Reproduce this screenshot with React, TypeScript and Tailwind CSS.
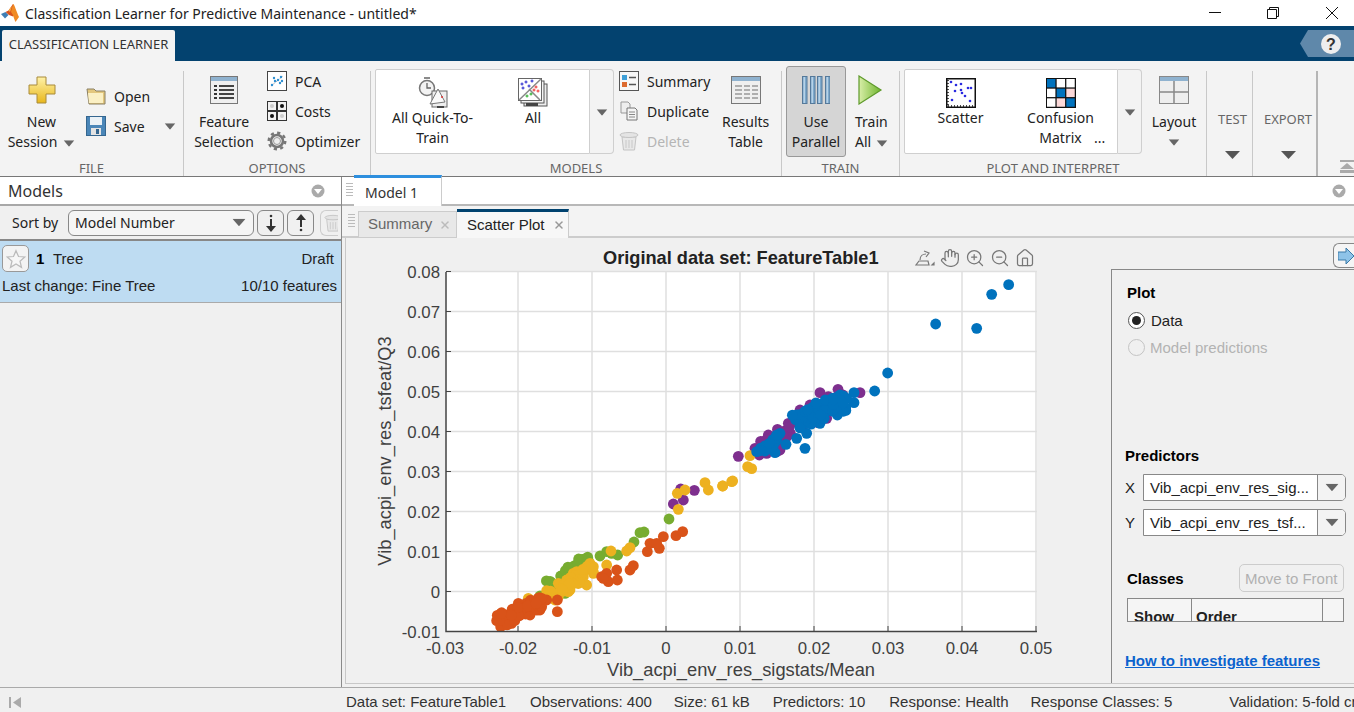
import type { ReactNode } from "react";
import { Hand, Home, X, ZoomIn, ZoomOut } from "lucide-react";

const ARIAL = "font-['Liberation_Sans',Arial,sans-serif]";

function Caret({ className = "" }: { className?: string }) {
  return (
    <svg width="12" height="7" viewBox="0 0 12 7" className={className}>
      <path d="M0 0h12L6 7z" fill="#666" />
    </svg>
  );
}

function MatlabLogo() {
  return (
    <svg width="20" height="20" viewBox="0 0 20 20">
      <path d="M0 11l4.500-2 3 3-3.500 3.500z" fill="#3f7fb5" />
      <path d="M4.500 9l3-1.500L12 1l3 9-3 3.500L8 12z" fill="#d9531e" />
      <path d="M12 1c1.500 0 3.500 8 6 13l-3.500 5c-1-2-2-5-2.500-7l-2-3z" fill="#f08a24" />
      <path d="M11 3l-3.500 4.500L9 9z" fill="#f5b041" />
    </svg>
  );
}

function PlusIcon() {
  return (
    <svg width="30" height="30" viewBox="0 0 30 30">
      <defs>
        <linearGradient id="gold" x1="0" y1="0" x2="0" y2="1">
          <stop offset="0" stopColor="#fff2a8" />
          <stop offset="1" stopColor="#e8b71c" />
        </linearGradient>
      </defs>
      <path d="M10 2h9v8h9v9h-9v9h-9v-9H2v-9h8z" fill="url(#gold)" stroke="#a88a3a" />
    </svg>
  );
}

function FolderIcon() {
  return (
    <svg width="20" height="18" viewBox="0 0 20 18">
      <path d="M1 2h7l2 2h9v13H3z" fill="#e3c77d" stroke="#8a8064" />
      <path d="M2 6h15v10H3z" fill="#fbf0c4" />
    </svg>
  );
}

function SaveIcon() {
  return (
    <svg width="20" height="20" viewBox="0 0 20 20">
      <rect x="0.500" y="0.500" width="19" height="19" fill="#4a86b8" stroke="#35668f" />
      <rect x="4" y="1" width="12" height="8" fill="#eaf1f6" />
      <rect x="5" y="12" width="10" height="7" fill="#e3e3e3" />
      <rect x="10" y="13" width="3" height="5" fill="#35668f" />
    </svg>
  );
}

function ListIcon() {
  return (
    <svg width="28" height="28" viewBox="0 0 28 28">
      <rect x="0.500" y="0.500" width="27" height="27" fill="#efefef" stroke="#777" />
      <rect x="1" y="1" width="26" height="4" fill="#8fb2cf" />
      {[9, 13, 17, 21].map((y) => (
        <g key={y}>
          <rect x="4" y={y} width="3" height="2" fill="#333" />
          <rect x="9" y={y} width="15" height="2" fill="#444" />
        </g>
      ))}
    </svg>
  );
}

function PcaIcon() {
  return (
    <svg width="20" height="20" viewBox="0 0 20 20">
      <rect x="0.500" y="0.500" width="19" height="19" fill="#fff" stroke="#444" />
      <path d="M4 15L16 5" stroke="#9ab" strokeDasharray="2 1" />
      {[[5, 14], [8, 10], [11, 9], [14, 6], [13, 12], [7, 7], [15, 10]].map(([x, y]) => (
        <circle key={`${x}-${y}`} cx={x} cy={y} r="1.200" fill="#2f8fd0" />
      ))}
    </svg>
  );
}

function CostsIcon() {
  const cells: [number, number, boolean][] = [[1, 1, false], [11, 1, true], [1, 11, true], [11, 11, false]];
  return (
    <svg width="20" height="20" viewBox="0 0 20 20">
      <rect width="20" height="20" fill="#333" />
      {cells.map(([x, y, dark]) => (
        <g key={`${x}-${y}`}>
          <rect x={x} y={y} width="8" height="8" fill="#f2f2f2" />
          <circle cx={x + 4} cy={y + 4} r="2" fill={dark ? "#111" : "#ccc"} />
        </g>
      ))}
    </svg>
  );
}

function GearIcon() {
  return (
    <svg width="20" height="20" viewBox="0 0 20 20" fill="none">
      <circle cx="10" cy="10" r="8.300" stroke="#777" strokeWidth="2.400" strokeDasharray="3.200 3.300" />
      <circle cx="10" cy="10" r="6" stroke="#777" strokeWidth="2.600" />
      <circle cx="10" cy="10" r="3.500" fill="#eee" stroke="#999" />
    </svg>
  );
}

function GalleryCharts() {
  return (
    <svg width="30" height="30" viewBox="0 0 30 30">
      <rect x="6" y="6" width="23" height="22" fill="#eee" stroke="#555" />
      <rect x="3" y="3" width="23" height="22" fill="#f5f5f5" stroke="#555" />
      <rect x="0.500" y="0.500" width="23" height="22" fill="#fff" stroke="#666" />
      <path d="M1 22L23 1M11 11l11 11" stroke="#888" strokeWidth="1.500" />
      {[[4, 6], [8, 4], [11, 8], [5, 10], [14, 3]].map(([x, y]) => (
        <path key={`${x}-${y}`} d={`M${x - 1.500} ${y}h3M${x} ${y - 1.500}v3`} stroke="#22c" />
      ))}
      {[[18, 9], [20, 13], [16, 12]].map(([x, y]) => (
        <path key={`${x}-${y}`} d={`M${x - 1.500} ${y}h3M${x} ${y - 1.500}v3`} stroke="#e33" />
      ))}
      {[[9, 18], [13, 16]].map(([x, y]) => (
        <path key={`${x}-${y}`} d={`M${x - 1.500} ${y}h3M${x} ${y - 1.500}v3`} stroke="#2a2" />
      ))}
      <rect x="8" y="25" width="12" height="3" fill="#444" />
    </svg>
  );
}

function QuickIcon() {
  return (
    <svg width="30" height="32" viewBox="0 0 30 32">
      <circle cx="9" cy="11" r="7.500" fill="#f3f3f3" stroke="#777" strokeWidth="1.500" />
      <path d="M9 6v5h4M6 1h6" stroke="#666" strokeWidth="1.300" fill="none" />
      <rect x="14" y="14" width="15" height="16" fill="#eee" stroke="#666" />
      <path d="M12 27l8-15 7 13z" fill="#fafafa" stroke="#777" />
      <circle cx="24" cy="20" r="1" fill="#d33" />
      <path d="M19 30h7" stroke="#444" strokeWidth="2" />
    </svg>
  );
}

function SummaryIcon() {
  return (
    <svg width="20" height="20" viewBox="0 0 20 20">
      <rect x="0.500" y="0.500" width="19" height="19" fill="#f7f7f7" stroke="#555" />
      <rect x="3" y="4" width="5" height="5" fill="#3fa0d8" />
      <rect x="3" y="11" width="5" height="5" fill="#dd6b30" />
      <path d="M10 6.500h7M10 13.500h7" stroke="#555" strokeWidth="1.500" />
    </svg>
  );
}

function DuplicateIcon() {
  return (
    <svg width="20" height="20" viewBox="0 0 20 20">
      <path d="M2 1h7l2 2v9H2z" fill="#eee" stroke="#999" />
      <path d="M8 7h8l2 2v10H8z" fill="#f5f5f5" stroke="#777" />
      <path d="M10 11h6M10 13.500h6M10 16h6" stroke="#888" />
    </svg>
  );
}

function TrashIcon({ size = 20 }: { size?: number }) {
  return (
    <svg width={size} height={size} viewBox="0 0 20 20">
      <path d="M3 6h14l-1.500 13h-11z" fill="#e8e8e8" stroke="#c4c4c4" />
      <ellipse cx="10" cy="4" rx="9" ry="2.500" fill="#e4e4e4" stroke="#c4c4c4" />
      <path d="M7 9v8M10 9v8M13 9v8" stroke="#c8c8c8" />
    </svg>
  );
}

function TableIcon() {
  return (
    <svg width="30" height="28" viewBox="0 0 30 28">
      <rect x="0.500" y="0.500" width="29" height="27" fill="#efefef" stroke="#777" />
      <rect x="1" y="1" width="28" height="4" fill="#8fb2cf" />
      {[9, 13, 17, 21].map((y) => (
        <path key={y} d={`M4 ${y + 1}h7M13 ${y + 1}h6M21 ${y + 1}h6`} stroke="#999" strokeWidth="1.500" />
      ))}
    </svg>
  );
}

function ParallelIcon() {
  return (
    <svg width="28" height="28" viewBox="0 0 28 28">
      {[0, 8, 15, 23].map((x) => (
        <g key={x}>
          <rect x={x + 0.500} y="0.500" width="4.500" height="27" fill="#7ea9cc" stroke="#55799a" />
          <rect x={x + 1.500} y="1" width="1.500" height="26" fill="#b6d2e7" />
        </g>
      ))}
    </svg>
  );
}

function PlayIcon() {
  return (
    <svg width="26" height="30" viewBox="0 0 26 30">
      <defs>
        <linearGradient id="play" x1="0" y1="0" x2="1" y2="0">
          <stop offset="0" stopColor="#d8eea8" />
          <stop offset="1" stopColor="#6fb52d" />
        </linearGradient>
      </defs>
      <path d="M2 1l22 14L2 29z" fill="url(#play)" stroke="#5e9a2b" strokeWidth="1.200" />
    </svg>
  );
}

function ScatterIcon() {
  const pts = [[5, 4], [10, 7], [15, 6], [9, 13], [15, 12], [16, 15], [22, 10], [25, 10], [19, 18], [6, 22], [24, 23]];
  return (
    <svg width="30" height="30" viewBox="0 0 30 30">
      <rect x="0.750" y="0.750" width="28.500" height="28.500" fill="#fff" stroke="#111" strokeWidth="1.500" />
      <path d="M2 28h26M2 2v26" stroke="#111" strokeDasharray="1 2" strokeWidth="1.500" />
      {pts.map(([x, y]) => (
        <circle key={`${x}-${y}`} cx={x} cy={y} r="1.300" fill="#2a2ae0" />
      ))}
    </svg>
  );
}

function ConfusionIcon() {
  const cells = ["#0072bd", "#fff", "#fff", "#fff", "#0072bd", "#fcd9d9", "#fff", "#fcd9d9", "#0072bd"];
  return (
    <svg width="30" height="30" viewBox="0 0 30 30">
      <rect width="30" height="30" fill="#111" />
      {cells.map((c, i) => (
        <rect key={i} x={1 + (i % 3) * 9.670} y={1 + Math.floor(i / 3) * 9.670} width="8.400" height="8.400" fill={c} />
      ))}
    </svg>
  );
}

function LayoutIcon() {
  return (
    <svg width="30" height="28" viewBox="0 0 30 28">
      <rect x="0.500" y="0.500" width="29" height="27" fill="#eee" stroke="#888" />
      <rect x="1" y="1" width="28" height="4" fill="#8fb2cf" />
      <path d="M1 16h28M15 5v22" stroke="#888" strokeWidth="1.500" />
    </svg>
  );
}

function BrushIcon() {
  return (
    <svg width="20" height="20" viewBox="0 0 20 20" fill="none" stroke="#777" strokeWidth="1.200">
      <path d="M1 17h13l-1-4H4zM5 12c0-4 3-6 6-6M9 3l5 2-3 4" />
      <path d="M17 17l2 0 0-2z" fill="#777" />
    </svg>
  );
}

function SmallTool({ icon, label, disabled, arrow }: { icon: ReactNode; label: string; disabled?: boolean; arrow?: boolean }) {
  return (
    <div className={`flex h-[30px] items-center ${disabled ? "text-[#b5b5b5]" : "text-[#222]"}`}>
      <span className="flex w-[20px] justify-center">{icon}</span>
      <span className="ml-[8px]">{label}</span>
      {arrow && <Caret className="ml-auto mr-[-1px] scale-90" />}
    </div>
  );
}

function BigTool({ icon, lines, arrow, className = "" }: { icon: ReactNode; lines: string[]; arrow?: boolean; className?: string }) {
  return (
    <div className={`flex flex-col items-center pt-[14px] leading-[20px] text-[#222] ${className}`}>
      <div className="flex h-[30px] items-center">{icon}</div>
      <div className="mt-[7px] text-center">
        {lines.map((l, i) => (
          <div key={l} className="whitespace-nowrap">
            {l}
            {arrow && i === lines.length - 1 && <Caret className="ml-[6px] inline-block scale-90 align-middle" />}
          </div>
        ))}
      </div>
    </div>
  );
}

function Section({ label, className, children }: { label: string; className: string; children: ReactNode }) {
  return (
    <div className={`flex h-full shrink-0 flex-col border-r border-[#c8c8c8] ${className}`}>
      <div className="flex h-[89px]">{children}</div>
      <div className="text-center text-[13px] leading-[16px] text-[#666]">{label}</div>
    </div>
  );
}

function GalleryItem({ icon, lines, more, className }: { icon: ReactNode; lines: string[]; more?: boolean; className: string }) {
  return (
    <div className={`flex flex-col items-center pt-[7px] leading-[20px] text-[#222] ${className}`}>
      <div className="flex h-[32px] items-center">{icon}</div>
      <div className="mt-[-1px] text-center">
        {lines.map((l, i) => (
          <div key={l} className="relative whitespace-nowrap">
            {l}
            {more && i === 1 && <span className="absolute left-full top-0">...</span>}
          </div>
        ))}
      </div>
    </div>
  );
}

function GalleryArrow() {
  return (
    <div className="flex w-[24px] items-center justify-center rounded-r-[4px] border border-l-0 border-[#cfcfcf] bg-[#f3f3f3]">
      <Caret className="mb-[-1px] scale-90" />
    </div>
  );
}

function Toolstrip() {
  return (
    <div className="flex h-[116px] shrink-0 border-b border-[#777] bg-[#f3f3f3] pt-[10px] text-[14px]">
      <Section label="FILE" className="w-[184px]">
        <BigTool icon={<PlusIcon />} lines={["New", "Session"]} arrow className="mt-[-10px] w-[83px]" />
        <div className="ml-[3px] w-[89px] pt-[10px]">
          <SmallTool icon={<FolderIcon />} label="Open" />
          <SmallTool icon={<SaveIcon />} label="Save" arrow />
        </div>
      </Section>
      <Section label="OPTIONS" className="w-[187px]">
        <BigTool icon={<ListIcon />} lines={["Feature", "Selection"]} className="mt-[-10px] w-[80px]" />
        <div className="ml-[3px] mt-[-5px]">
          <SmallTool icon={<PcaIcon />} label="PCA" />
          <SmallTool icon={<CostsIcon />} label="Costs" />
          <SmallTool icon={<GearIcon />} label="Optimizer" />
        </div>
      </Section>
      <Section label="MODELS" className="w-[411px]">
        <div className="ml-[4px] mt-[-2px] flex h-[85px]">
          <div className="flex w-[215px] rounded-l-[2px] border border-[#cfcfcf] bg-white">
            <GalleryItem icon={<QuickIcon />} lines={["All Quick-To-", "Train"]} className="w-[113px]" />
            <GalleryItem icon={<GalleryCharts />} lines={["All"]} className="w-[88px]" />
          </div>
          <GalleryArrow />
        </div>
        <div className="ml-[5px] mt-[-5px] w-[92px]">
          <SmallTool icon={<SummaryIcon />} label="Summary" />
          <SmallTool icon={<DuplicateIcon />} label="Duplicate" />
          <SmallTool icon={<TrashIcon />} label="Delete" disabled />
        </div>
        <BigTool icon={<TableIcon />} lines={["Results", "Table"]} className="mt-[-10px] w-[78px]" />
      </Section>
      <Section label="TRAIN" className="w-[118px]">
        <div className="ml-[4px] mt-[-5px] h-[91px] w-[60px] rounded-[3px] border border-[#999] bg-[#d5d5d5]">
          <BigTool icon={<ParallelIcon />} lines={["Use", "Parallel"]} className="mt-[-6px]" />
        </div>
        <div className="ml-[4px] mt-[-10px] flex w-[46px] flex-col items-start pt-[14px] leading-[20px] text-[#222]">
          <div className="flex h-[30px] w-[40px] items-center justify-center">
            <PlayIcon />
          </div>
          <div className="ml-[5px] mt-[7px]">Train</div>
          <div className="ml-[5px] whitespace-nowrap">
            All
            <Caret className="ml-[5px] inline-block scale-90 align-middle" />
          </div>
        </div>
      </Section>
      <Section label="PLOT AND INTERPRET" className="w-[307px]">
        <div className="ml-[4px] mt-[-2px] flex h-[85px]">
          <div className="flex w-[214px] rounded-l-[2px] border border-[#cfcfcf] bg-white">
            <GalleryItem icon={<ScatterIcon />} lines={["Scatter"]} className="w-[111px]" />
            <GalleryItem icon={<ConfusionIcon />} lines={["Confusion", "Matrix"]} more className="w-[89px]" />
          </div>
          <GalleryArrow />
        </div>
        <div className="ml-[1px] mt-[-10px] flex w-[62px] flex-col items-center">
          <BigTool icon={<LayoutIcon />} lines={["Layout"]} />
          <Caret className="mt-[7px] scale-90" />
        </div>
      </Section>
      <CollapsedSection label="TEST" className="w-[46px] pl-[6px]" />
      <CollapsedSection label="EXPORT" className="w-[65px] border-r-2 border-r-[#b5b5b5] pl-[7px]" />
      <div className="flex flex-1 items-end justify-end pb-[3px]">
        <svg width="14" height="14" viewBox="0 0 14 14">
          <path d="M0 1h14v2H0zM7 4l7 6H0zM0 11h14v3H0z" fill="#aaa" />
        </svg>
      </div>
    </div>
  );
}

function CollapsedSection({ label, className }: { label: string; className: string }) {
  return (
    <div className={`flex shrink-0 flex-col items-center border-r border-[#c8c8c8] pt-[40px] ${className}`}>
      <div className="text-[13px] leading-[16px] text-[#666]">{label}</div>
      <svg width="15" height="8" viewBox="0 0 15 8" className="mt-[24px]">
        <path d="M0 0h15L7.500 8z" fill="#555" />
      </svg>
    </div>
  );
}

function CircleMenu() {
  return (
    <svg width="14" height="14" viewBox="0 0 14 14">
      <circle cx="7" cy="7" r="6.500" fill="#aaa" />
      <path d="M3 5h8l-4 5z" fill="#fff" />
    </svg>
  );
}

function ModelsPanel() {
  return (
    <div className="flex w-[342px] shrink-0 flex-col border-r border-[#8a8a8a] bg-[#f0f0f0]">
      <div className="flex h-[29px] items-center justify-between border-b-2 border-[#a8a8a8] bg-white pl-[8px] pr-[16px] text-[16px] text-[#333]">
        Models
        <CircleMenu />
      </div>
      <div className="flex h-[35px] items-center border-b-2 border-[#888] pl-[12px] text-[14px] text-[#222]">
        Sort by
        <div className="ml-[10px] flex h-[26px] w-[186px] items-center justify-between rounded-[6px] border border-[#888] bg-[#f5f5f5] pl-[6px] pr-[8px]">
          Model Number
          <Caret className="scale-110" />
        </div>
        <div className="ml-[3px] flex h-[26px] w-[27px] items-center justify-center rounded-[6px] border border-[#888]">
          <svg width="12" height="18" viewBox="0 0 12 18">
            <circle cx="6" cy="2" r="1.300" fill="#333" />
            <path d="M6 5v9" stroke="#333" strokeWidth="2" />
            <path d="M1 12h10l-5 6z" fill="#333" />
          </svg>
        </div>
        <div className="ml-[3px] flex h-[26px] w-[27px] items-center justify-center rounded-[6px] border border-[#888]">
          <svg width="12" height="18" viewBox="0 0 12 18">
            <circle cx="6" cy="16" r="1.300" fill="#333" />
            <path d="M6 4v9" stroke="#333" strokeWidth="2" />
            <path d="M1 6h10L6 0z" fill="#333" />
          </svg>
        </div>
        <div className="ml-[6px] flex h-[26px] w-[18px] items-center overflow-hidden rounded-l-[6px] border border-r-0 border-[#ccc] pl-[3px]">
          <span className="shrink-0">
            <TrashIcon size={18} />
          </span>
        </div>
      </div>
      <div className={`h-[62px] border-b border-[#aaa] bg-[#bedcf2] text-[15px] leading-[21px] text-[#222] ${ARIAL}`}>
        <div className="flex h-[33px] items-center pl-[2px] pr-[7px] pt-[2px]">
          <div className="flex h-[27px] w-[27px] items-center justify-center rounded-[5px] border border-[#999] bg-[#f3f3f3]">
            <svg width="20" height="20" viewBox="0 0 24 24">
              <path d="M12 2l3 7 7.500.600-5.700 5 1.800 7.400L12 18l-6.600 4 1.800-7.400-5.700-5L9 9z" fill="#f7f7f7" stroke="#bbb" strokeWidth="1.500" />
            </svg>
          </div>
          <b className="ml-[7px] w-[17px] text-black">1</b>
          <span>Tree</span>
          <span className="ml-auto">Draft</span>
        </div>
        <div className="mt-[1px] flex justify-between pl-[2px] pr-[4px]">
          <span>Last change: Fine Tree</span>
          <span>10/10 features</span>
        </div>
      </div>
    </div>
  );
}

function Grip() {
  return <div className="h-[13px] w-[7px] bg-[repeating-linear-gradient(#bbb_0,#bbb_1px,transparent_1px,transparent_3px)]" />;
}

// reference coordinates of the dots, read off 3x crops
const LOW = (x: number, y: number): [number, number] => [430 + x / 3, 380 + y / 3];
const HIGH = (x: number, y: number): [number, number] => [700 + x / 3, 270 + y / 3];
const rand = (i: number) => {
  const s = Math.sin(i * 12.9898) * 43758.5453;
  return s - Math.floor(s);
};
// extra dots to fill the dense part of a cluster
function band(n: number, x0: number, y0: number, x1: number, y1: number, spread: number, seed: number): [number, number][] {
  return Array.from({ length: n }, (_, i) => {
    const t = rand(seed + i);
    const off = (rand(seed + 500 + i) - 0.5) * spread;
    return [x0 + (x1 - x0) * t + off * 0.5, y0 + (y1 - y0) * t + off];
  });
}

const PURPLE: [number, number][] = [
  ...[[752, 327], [793, 331], [760, 360], [730, 372]].map(([x, y]) => LOW(x, y)),
  ...[[115, 559], [165, 535], [178, 555], [205, 495], [200, 510], [265, 460], [270, 490], [240, 540], [300, 420], [330, 405], [360, 368], [414, 358], [480, 368], [385, 380], [380, 445], [260, 500], [200, 550], [230, 545]].map(([x, y]) => HIGH(x, y)),
  ...band(30, 762, 448, 850, 394, 14, 40),
];
const GREEN: [number, number][] = [
  ...[[330, 648], [368, 610], [392, 588], [432, 558], [450, 560], [405, 640], [510, 528], [530, 515], [563, 525], [545, 520], [612, 486], [630, 458], [642, 456], [717, 417]].map(([x, y]) => LOW(x, y)),
  ...band(24, 548, 586, 590, 556, 10, 140),
];
const YELLOW: [number, number][] = [
  ...[[295, 655], [350, 632], [375, 660], [385, 610], [400, 620], [420, 630], [430, 580], [445, 600], [460, 590], [430, 610], [410, 600], [440, 575], [470, 615], [480, 550], [490, 560], [490, 580], [530, 555], [543, 513], [590, 513], [600, 503], [745, 388], [742, 340], [765, 330], [825, 308], [835, 330], [878, 318], [905, 305], [415, 635], [395, 630], [365, 640]].map(([x, y]) => LOW(x, y)),
  ...[[150, 557], [143, 590], [155, 596], [98, 633], [68, 648]].map(([x, y]) => HIGH(x, y)),
  ...band(40, 552, 596, 592, 568, 9, 240),
];
const ORANGE: [number, number][] = [
  ...[[200, 722], [212, 740], [225, 705], [245, 730], [265, 670], [250, 690], [270, 690], [290, 680], [300, 705], [320, 680], [330, 690], [350, 660], [382, 660], [382, 695], [215, 715], [235, 715], [260, 700], [280, 690], [305, 680], [330, 665], [515, 590], [530, 580], [560, 570], [535, 605], [562, 600], [520, 595], [600, 570], [610, 557], [652, 515], [660, 490], [688, 505], [680, 490], [700, 470], [738, 467], [758, 455]].map(([x, y]) => LOW(x, y)),
  ...band(50, 498, 621, 545, 602, 13, 340),
];
const BLUE: [number, number][] = [
  ...[[926, 44], [875, 73], [707, 162], [830, 175], [563, 309], [524, 363], [462, 368], [315, 535], [290, 505], [258, 523], [225, 548], [170, 545], [195, 543], [240, 490], [230, 510], [210, 530], [290, 435], [315, 425], [350, 420], [300, 470], [320, 490], [360, 460], [340, 455], [380, 410], [400, 385], [420, 375], [412, 435], [437, 413], [462, 398], [370, 430], [330, 445], [390, 420], [350, 440], [410, 400], [440, 385], [320, 460], [300, 445]].map(([x, y]) => HIGH(x, y)),
  ...band(50, 795, 422, 846, 400, 17, 440),
  ...band(14, 758, 451, 785, 436, 9, 640),
];

const SERIES: [string, [number, number][]][] = [
  ["#7e2f8e", PURPLE],
  ["#77ac30", GREEN],
  ["#edb120", YELLOW],
  ["#d95319", ORANGE],
  ["#0072bd", BLUE],
];

const X_TICKS = [-0.03, -0.02, -0.01, 0, 0.01, 0.02, 0.03, 0.04, 0.05];
const Y_TICKS = [-0.01, 0, 0.01, 0.02, 0.03, 0.04, 0.05, 0.06, 0.07, 0.08];
const px = (v: number) => 666 + v * 7400;
const py = (v: number) => 591.500 - v * 4000;

// viewBox uses page coordinates so the crop numbers can be used directly
function Chart() {
  return (
    <svg width="765" height="422" viewBox="346 262 765 422" className={ARIAL}>
      <rect x="446" y="272" width="591" height="359" fill="#fff" />
      {X_TICKS.slice(1).map((v) => (
        <path key={v} d={`M${px(v)} 272V631`} stroke="#dfdfdf" strokeWidth="1.500" />
      ))}
      {Y_TICKS.slice(1).map((v) => (
        <path key={v} d={`M446 ${py(v)}H1037`} stroke="#dfdfdf" strokeWidth="1.500" />
      ))}
      {SERIES.map(([color, pts]) => (
        <g key={color} fill={color}>
          {pts.map(([x, y], i) => (
            <circle key={i} cx={x} cy={y} r="5.400" />
          ))}
        </g>
      ))}
      <path d="M446 272V631.500H1037" fill="none" stroke="#444" strokeWidth="1.500" />
      {X_TICKS.slice(1).map((v) => (
        <path key={v} d={`M${px(v)} 631V626`} stroke="#444" />
      ))}
      {Y_TICKS.slice(1).map((v) => (
        <path key={v} d={`M446 ${py(v)}H451`} stroke="#444" />
      ))}
      <g fill="#404040" fontSize="16.800">
        {X_TICKS.map((v) => (
          <text key={v} x={px(v) + (v === -0.03 ? 1 : 0)} y="654" textAnchor="middle">
            {v}
          </text>
        ))}
        {Y_TICKS.map((v) => (
          <text key={v} x="440" y={py(v) + 6} textAnchor="end">
            {v}
          </text>
        ))}
        <text x="741" y="676" textAnchor="middle" fontSize="18.300">
          Vib_acpi_env_res_sigstats/Mean
        </text>
        <text transform="translate(391 451) rotate(-90)" textAnchor="middle" fontSize="18.300">
          Vib_acpi_env_res_tsfeat/Q3
        </text>
      </g>
    </svg>
  );
}

function Select({ label, value }: { label: string; value: string }) {
  return (
    <div className="flex items-center">
      <span className="w-[18px]">{label}</span>
      <div className="flex h-[27px] w-[203px] overflow-hidden rounded-r-[5px] border border-[#888] bg-white">
        <div className="flex w-[174px] items-center whitespace-nowrap border-r border-[#888] pl-[6px]">{value}</div>
        <div className="flex flex-1 items-center justify-center bg-[#f3f3f3]">
          <Caret className="scale-110" />
        </div>
      </div>
    </div>
  );
}

function OptionsPanel() {
  return (
    <div className={`mt-[31px] flex h-[414px] w-[243px] shrink-0 flex-col border-l border-t border-[#888] text-[15px] leading-[21px] text-[#222] ${ARIAL}`}>
      <div className="ml-[15px] mt-[14px] font-bold leading-[18px] text-black">Plot</div>
      <div className="ml-[16px] mt-[8px] flex items-center">
        <span className="flex h-[17px] w-[17px] items-center justify-center rounded-full border border-[#555] bg-white">
          <span className="h-[9px] w-[9px] rounded-full bg-[#222]" />
        </span>
        <span className="ml-[6px]">Data</span>
      </div>
      <div className="ml-[16px] mt-[6px] flex items-center text-[#b3b3b3]">
        <span className="h-[17px] w-[17px] rounded-full border border-[#c4c4c4]" />
        <span className="ml-[5px]">Model predictions</span>
      </div>
      <div className="ml-[13px] mt-[89px] font-bold leading-[18px] text-black">Predictors</div>
      <div className="ml-[13px] mt-[9px] flex flex-col gap-[8px]">
        <Select label="X" value="Vib_acpi_env_res_sig..." />
        <Select label="Y" value="Vib_acpi_env_res_tsf..." />
      </div>
      <div className="ml-[15px] mt-[28px] flex h-[28px] items-center">
        <b className="text-black">Classes</b>
        <div className="ml-[55px] flex h-[28px] w-[105px] items-center justify-center rounded-[5px] border border-[#ccc] text-[#b0b0b0]">
          Move to Front
        </div>
      </div>
      <div className="ml-[15px] mt-[6px] flex h-[24px] w-[217px] overflow-hidden border border-[#888] bg-[#f5f5f5] font-bold">
        <div className="w-[64px] border-r border-[#888] pl-[6px] pt-[7px]">Show</div>
        <div className="w-[131px] border-r border-[#888] pl-[4px] pt-[7px]">Order</div>
      </div>
      <a className="ml-[13px] mt-[28px] font-bold text-[#0b63ce] underline">How to investigate features</a>
    </div>
  );
}

function MainArea() {
  return (
    <div className="flex min-w-0 flex-1 flex-col">
      <div className="flex h-[29px] shrink-0 items-end border-b-2 border-[#b8b8b8] bg-white pl-[4px]">
        <div className="mb-[8px]">
          <Grip />
        </div>
        <div className="mb-[-2px] ml-[1px] flex h-[31px] w-[88px] items-center border-r border-[#ccc] border-t-[3px] border-t-[#2e8fde] bg-white pl-[11px] text-[14px] text-[#333]">
          Model 1
        </div>
        <div className="mb-[6px] ml-auto mr-[8px]">
          <CircleMenu />
        </div>
      </div>
      <div className={`flex h-[32px] shrink-0 items-end border-b-2 border-[#ccc] bg-[#f3f3f3] pl-[6px] text-[15px] ${ARIAL}`}>
        <div className="mb-[9px]">
          <Grip />
        </div>
        <div className="mb-[-2px] ml-[3px] flex h-[27px] w-[99px] items-center border border-[#ccc] bg-[#e8e8e8] pl-[9px] text-[#666]">
          Summary
          <X size={12} strokeWidth={3} className="ml-[7px] text-[#bbb]" />
        </div>
        <div className="mb-[-2px] flex h-[29px] w-[112px] items-center border-r border-[#ccc] border-t-[3px] border-t-[#00426f] bg-[#f7f7f7] pl-[10px] text-[#222]">
          Scatter Plot
          <X size={12} strokeWidth={3} className="ml-[8px] text-[#999]" />
        </div>
      </div>
      <div className="flex min-h-0 flex-1 bg-[#f0f0f0] pl-[3px]">
        <div className="relative flex h-[446px] min-w-0 flex-1 border-b border-[#c8c8c8]">
          <div className="flex h-[446px] w-[766px] shrink-0 flex-col border-l border-[#c8c8c8]">
            <div className={`h-[24px] pl-[257px] pt-[11px] text-[18.200px] font-bold leading-[18px] text-[#222] ${ARIAL}`}>
              Original data set: FeatureTable1
            </div>
            <Chart />
          </div>
          <OptionsPanel />
          <div className="absolute left-[570px] top-[10px] flex items-center gap-[5px] text-[#777]">
            <BrushIcon />
            <Hand size={20} strokeWidth={1.500} />
            <ZoomIn size={20} strokeWidth={1.500} />
            <ZoomOut size={20} strokeWidth={1.500} />
            <Home size={20} strokeWidth={1.500} />
          </div>
          <div className="absolute left-[988px] top-[5px] flex h-[25px] w-[30px] items-center rounded-l-[6px] border border-r-0 border-[#888] bg-[#f5f5f5] pl-[4px]">
            <svg width="20" height="16" viewBox="0 0 20 16">
              <path d="M0 4h8V0l8 8-8 8v-4H0z" fill="#8ec3e8" stroke="#3a7aa8" />
              <path d="M18 0v16" stroke="#3a7aa8" strokeWidth="2" />
            </svg>
          </div>
        </div>
      </div>
    </div>
  );
}

export default function App() {
  return (
    <div className="flex h-[712px] w-[1354px] flex-col overflow-hidden bg-white font-['Noto_Sans',sans-serif] text-[#222]">
      <div className="flex h-[26px] shrink-0 items-center bg-white pl-[1px] text-[14px] text-[#222]">
        <MatlabLogo />
        <span className="ml-[4px]">Classification Learner for Predictive Maintenance - untitled*</span>
        <div className="ml-auto flex items-center">
          <svg width="12" height="2" viewBox="0 0 12 2" className="mr-[46px]">
            <rect width="12" height="1" fill="#111" />
          </svg>
          <svg width="12" height="12" viewBox="0 0 12 12" className="mr-[47px]">
            <path d="M2.500 2.500V.500h9v9h-2M.500 2.500h9v9h-9z" fill="none" stroke="#111" />
          </svg>
          <svg width="12" height="12" viewBox="0 0 12 12" className="mr-[16px]">
            <path d="M0 0l12 12M12 0L0 12" stroke="#111" />
          </svg>
        </div>
      </div>
      <div className="flex h-[35px] shrink-0 items-end justify-between bg-[#03426f] pl-[2px]">
        <div className="flex h-[31px] w-[173px] items-center justify-center rounded-t-[2px] bg-[#f3f3f3] pb-[2px] text-[13px] text-[#333]">
          CLASSIFICATION LEARNER
        </div>
        <svg width="54" height="27" viewBox="0 0 54 27" className="mb-[4px]">
          <path d="M8 0h46v27H8L0 13.500z" fill="#5f88aa" />
          <circle cx="31" cy="14" r="10" fill="#eee" />
          <text x="31" y="20" textAnchor="middle" fontSize="16" fontWeight="700" fill="#333" className={ARIAL}>
            ?
          </text>
        </svg>
      </div>
      <Toolstrip />
      <div className="flex min-h-0 flex-1">
        <ModelsPanel />
        <MainArea />
      </div>
      <div className={`flex h-[25px] shrink-0 items-center overflow-hidden whitespace-nowrap border-t border-[#aaa] bg-[#f0f0f0] pt-[4px] text-[15px] text-[#333] ${ARIAL}`}>
        <div className="flex w-[346px] shrink-0 items-center pl-[9px]">
          <svg width="13" height="13" viewBox="0 0 13 13">
            <path d="M1 1v11" stroke="#aaa" strokeWidth="2" />
            <path d="M12 1v11L4 6.500z" fill="#aaa" />
          </svg>
        </div>
        <span>Data set: FeatureTable1</span>
        <span className="ml-[24px]">Observations: 400</span>
        <span className="ml-[22px]">Size: 61 kB</span>
        <span className="ml-[23px]">Predictors: 10</span>
        <span className="ml-[24px]">Response: Health</span>
        <span className="ml-[22px]">Response Classes: 5</span>
        <span className="ml-[57px]">Validation: 5-fold cross-validation</span>
      </div>
    </div>
  );
}
